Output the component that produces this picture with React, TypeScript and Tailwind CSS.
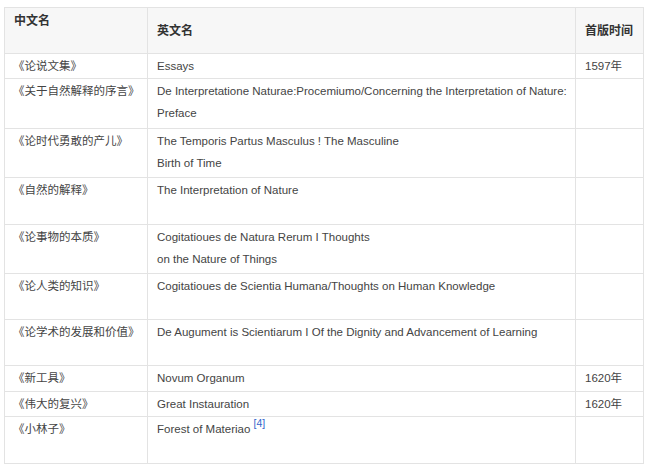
import React from "react";

type Row = {
  h: number;
  zh: string;
  en: React.ReactNode;
  year?: string;
};

const rows: Row[] = [
  { h: 25, zh: "《论说文集》", en: "Essays", year: "1597年" },
  {
    h: 50,
    zh: "《关于自然解释的序言》",
    en: (
      <>
        De Interpretatione Naturae:Procemiumo/Concerning the Interpretation of Nature:
        <br />
        Preface
      </>
    ),
  },
  {
    h: 49,
    zh: "《论时代勇敢的产儿》",
    en: (
      <>
        The Temporis Partus Masculus ! The Masculine
        <br />
        Birth of Time
      </>
    ),
  },
  { h: 47, zh: "《自然的解释》", en: "The Interpretation of Nature" },
  {
    h: 49,
    zh: "《论事物的本质》",
    en: (
      <>
        Cogitatioues de Natura Rerum I Thoughts
        <br />
        on the Nature of Things
      </>
    ),
  },
  {
    h: 46,
    zh: "《论人类的知识》",
    en: "Cogitatioues de Scientia Humana/Thoughts on Human Knowledge",
  },
  {
    h: 46,
    zh: "《论学术的发展和价值》",
    en: "De Augument is Scientiarum I Of the Dignity and Advancement of Learning",
  },
  { h: 26, zh: "《新工具》", en: "Novum Organum", year: "1620年" },
  { h: 25, zh: "《伟大的复兴》", en: "Great Instauration", year: "1620年" },
  {
    h: 47,
    zh: "《小林子》",
    en: (
      <>
        Forest of Materiao{" "}
        <span className="relative -top-[6px] text-[10.5px] text-[#3366cc]">[4]</span>
      </>
    ),
  },
];

const font = {
  fontFamily: '"Liberation Sans", Arial, "Noto Sans CJK SC", sans-serif',
};

export default function App() {
  return (
    <div className="w-[650px] h-[464px] bg-white overflow-hidden" style={font}>
      <div className="ml-[4px] mt-[7px] w-[640px] border-l border-r border-b border-[#e3e3e3] text-[11.5px] leading-[22px] text-[#444]">
        {/* header */}
        <div className="flex h-[46px] border-t border-[#e3e3e3] bg-[#f7f7f7] font-bold text-[12px] text-[#333]">
          <div className="w-[142px] pl-[9px] pt-[2px]">中文名</div>
          <div className="w-[428px] border-l border-[#e3e3e3] pl-[9px] pt-[12px]">英文名</div>
          <div className="w-[68px] border-l border-[#e3e3e3] pl-[9px] pt-[12px]">首版时间</div>
        </div>
        {rows.map((r, i) => (
          <div
            key={i}
            className="flex border-t border-[#e3e3e3]"
            style={{ height: r.h }}
          >
            <div className="w-[142px] pl-[8px] pt-[1px] whitespace-nowrap">{r.zh}</div>
            <div className="w-[428px] border-l border-[#e3e3e3] pl-[9px] pt-[1px] whitespace-nowrap">
              {r.en}
            </div>
            <div className="w-[68px] border-l border-[#e3e3e3] pl-[9px] pt-[1px] whitespace-nowrap">
              {r.year}
            </div>
          </div>
        ))}
      </div>
    </div>
  );
}
